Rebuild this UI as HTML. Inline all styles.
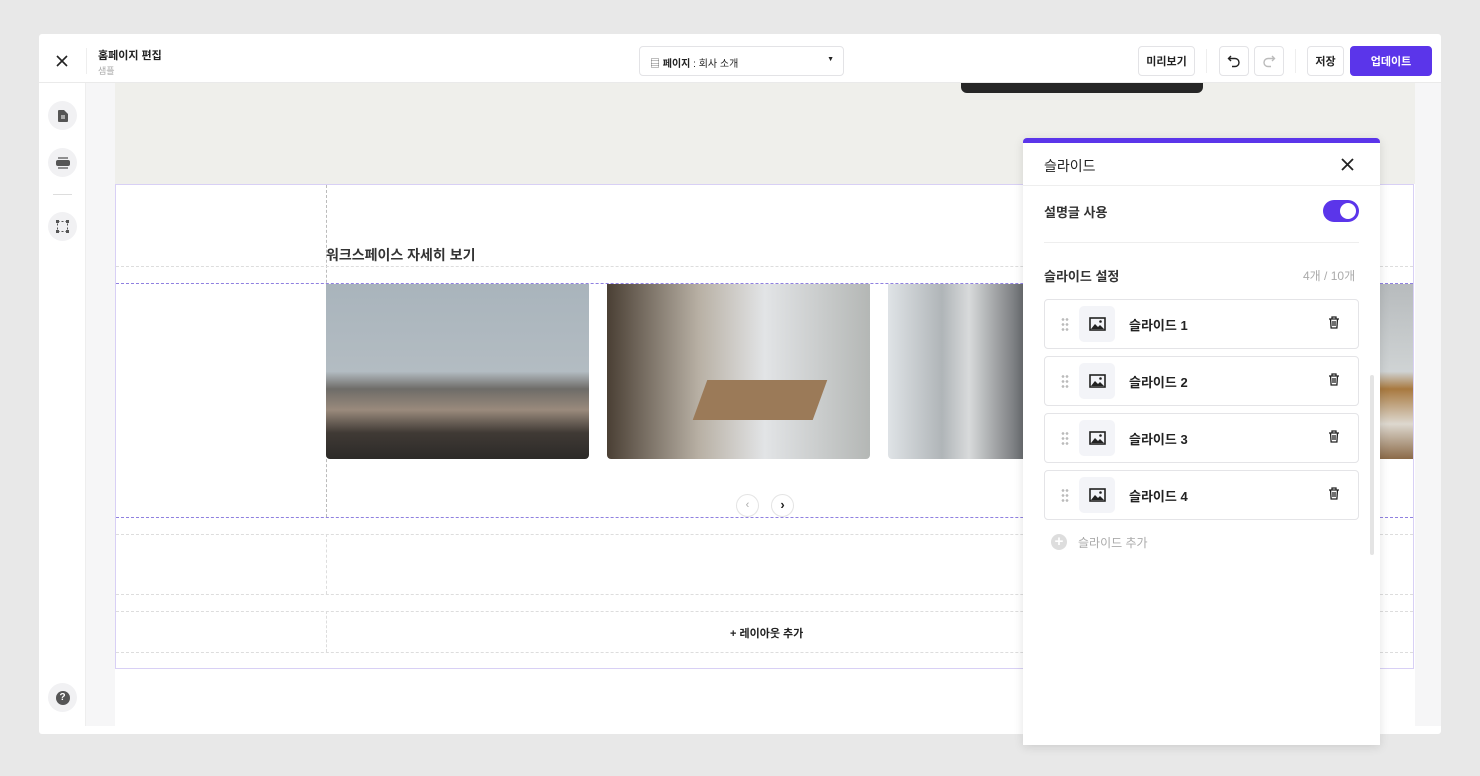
<!DOCTYPE html>
<html><head><meta charset="utf-8"><style>
*{box-sizing:border-box;margin:0;padding:0}
body{width:1480px;height:776px;background:#e8e8e8;font-family:"Liberation Sans","Noto Sans CJK KR",sans-serif;position:relative;overflow:hidden;color:#222}
.a{position:absolute}
.btn{position:absolute;top:46px;height:30px;border:1px solid #e3e3e6;border-radius:4px;background:#fff;font-size:11px;font-weight:bold;display:flex;align-items:center;justify-content:center}
.side{position:absolute;left:48px;width:29px;height:29px;border-radius:50%;background:#f1f1f3;display:flex;align-items:center;justify-content:center}
.dl{position:absolute;border-top:1px dashed #ddd}
.dv{position:absolute;border-left:1px dashed #ddd}
.item{position:absolute;left:1044px;width:315px;height:50px;border:1px solid #e4e4e7;border-radius:4px;background:#fff}
.item .g{position:absolute;left:16px;top:17px;width:8px;height:14px;background:radial-gradient(circle,#bbb 1.2px,transparent 1.5px) 0 0/4px 5px}
.item .ic{position:absolute;left:34px;top:6px;width:36px;height:36px;background:#f3f4f8;border-radius:5px;display:flex;align-items:center;justify-content:center}
.item .t{position:absolute;left:84px;top:15px;font-size:13px;font-weight:bold}
.item .d{position:absolute;right:18px;top:16px}
</style></head><body>
<div class="a" style="left:39px;top:34px;width:1402px;height:700px;background:#fff;border-radius:3px"></div>
<div class="a" style="left:39px;top:82px;width:1402px;height:1px;background:#eaeaea"></div>
<svg class="a" style="left:56px;top:55px" width="12" height="12" viewBox="0 0 12 12"><path d="M1 1L11 11M11 1L1 11" stroke="#222" stroke-width="1.6"/></svg>
<div class="a" style="left:86px;top:48px;width:1px;height:26px;background:#eee"></div>
<div class="a" style="left:98px;top:47px;font-size:11px;font-weight:bold">홈페이지 편집</div>
<div class="a" style="left:98px;top:64px;font-size:9px;color:#aaa">샘플</div>
<div class="a" style="left:639px;top:46px;width:205px;height:30px;border:1px solid #e3e3e6;border-radius:4px;font-size:10px;padding:8px 0 0 10px"><span style="color:#555">▤</span> <b>페이지</b> : 회사 소개<span class="a" style="right:9px;top:9px;font-size:7px">▼</span></div>
<div class="btn" style="left:1138px;width:57px">미리보기</div>
<div class="a" style="left:1206px;top:49px;width:1px;height:24px;background:#eee"></div>
<div class="btn" style="left:1219px;width:30px"><svg width="14" height="14" viewBox="0 0 14 14"><path d="M4 2L1.5 4.5L4 7M1.5 4.5H8a4 4 0 0 1 0 8H5" fill="none" stroke="#222" stroke-width="1.4"/></svg></div>
<div class="btn" style="left:1254px;width:30px"><svg width="14" height="14" viewBox="0 0 14 14"><path d="M10 2L12.5 4.5L10 7M12.5 4.5H6a4 4 0 0 0 0 8H9" fill="none" stroke="#bbb" stroke-width="1.4"/></svg></div>
<div class="a" style="left:1295px;top:49px;width:1px;height:24px;background:#eee"></div>
<div class="btn" style="left:1307px;width:37px">저장</div>
<div class="btn" style="left:1350px;width:82px;background:#5b35ea;border-color:#5b35ea;color:#fff">업데이트</div>
<div class="a" style="left:85px;top:83px;width:30px;height:643px;background:#f6f6f7;border-left:1px solid #eee"></div>
<div class="a" style="left:1415px;top:83px;width:26px;height:643px;background:#f6f6f7"></div>
<div class="side" style="top:101px"><svg width="10" height="12"><path d="M0 1a1 1 0 0 1 1-1h5l4 4v7a1 1 0 0 1-1 1H1a1 1 0 0 1-1-1z" fill="#555"/><path d="M3 6h4M3 8h4" stroke="#fff"/></svg></div>
<div class="side" style="top:148px"><svg width="14" height="12"><rect x="0" y="3" width="14" height="6" rx="2" fill="#555"/><path d="M2 1h10M2 11h10" stroke="#555" stroke-width="1.2"/></svg></div>
<div class="a" style="left:53px;top:194px;width:19px;height:1px;background:#ddd"></div>
<div class="side" style="top:212px"><svg width="13" height="13"><rect x="1.5" y="1.5" width="10" height="10" fill="none" stroke="#555" stroke-dasharray="2 2"/><g fill="#555"><rect x="0" y="0" width="3" height="3"/><rect x="10" y="0" width="3" height="3"/><rect x="0" y="10" width="3" height="3"/><rect x="10" y="10" width="3" height="3"/></g></svg></div>
<div class="side" style="top:683px"><div style="width:14px;height:14px;border-radius:50%;background:#555;color:#fff;font-size:10px;font-weight:bold;text-align:center;line-height:14px">?</div></div>
<div class="a" style="left:115px;top:83px;width:1300px;height:101px;background:#efefeb"></div>
<div class="a" style="left:961px;top:83px;width:242px;height:10px;background:#262626;border-radius:0 0 6px 6px"></div>
<div class="a" style="left:115px;top:184px;width:1299px;height:485px;border:1px solid #d8d0f5"></div>
<div class="dv" style="left:326px;top:185px;height:332px;border-color:#bbb"></div>
<div class="dl" style="left:116px;top:266px;width:1297px"></div>
<div class="a" style="left:326px;top:245px;font-size:14px;font-weight:bold;color:#333">워크스페이스 자세히 보기</div>
<div class="dl" style="left:116px;top:283px;width:1297px;border-color:#8f80e0"></div>
<div class="dl" style="left:116px;top:517px;width:1297px;border-color:#8f80e0"></div>
<div class="a" style="left:326px;top:284px;width:263px;height:175px;border-radius:0 0 4px 4px;background:linear-gradient(180deg,#a9b4bc 0%,#b3bcc2 50%,#6e6c68 60%,#9a8a7c 72%,#403a35 85%,#2c2a28 100%)"></div>
<div class="a" style="left:607px;top:284px;width:263px;height:175px;border-radius:0 0 4px 4px;background:linear-gradient(90deg,#4a3f34 0%,#b8b0a4 35%,#e2e4e6 60%,#b4b7b5 100%)"></div>
<div class="a" style="left:700px;top:380px;width:120px;height:40px;background:#9b7a58;transform:skewX(-20deg)"></div>
<div class="a" style="left:888px;top:284px;width:135px;height:175px;border-radius:0 0 0 4px;background:linear-gradient(90deg,#dfe3e6,#b0b5b8 40%,#d8dadb 60%,#6a6d70)"></div>
<div class="a" style="left:1380px;top:284px;width:33px;height:175px;background:linear-gradient(180deg,#b7bbbd 0%,#cfd3d4 50%,#a8793f 60%,#ddd8cf 80%,#8b6a48 100%)"></div>
<div class="a" style="left:736px;top:494px;width:23px;height:23px;border:1px solid #e4e4e4;border-radius:50%;font-size:11px;color:#aaa;text-align:center;line-height:21px">‹</div>
<div class="a" style="left:771px;top:494px;width:23px;height:23px;border:1px solid #e4e4e4;border-radius:50%;font-size:13px;font-weight:bold;text-align:center;line-height:20px">›</div>
<div class="dl" style="left:116px;top:534px;width:1297px"></div>
<div class="dv" style="left:326px;top:534px;height:60px"></div>
<div class="dl" style="left:116px;top:594px;width:1297px"></div>
<div class="dl" style="left:116px;top:611px;width:1297px"></div>
<div class="dv" style="left:326px;top:611px;height:41px"></div>
<div class="dl" style="left:116px;top:652px;width:1297px"></div>
<div class="a" style="left:730px;top:625px;font-size:11px;font-weight:bold">+ 레이아웃 추가</div>
<div class="a" style="left:1023px;top:138px;width:357px;height:607px;background:#fff;border-top:5px solid #5b35ea;border-radius:4px 4px 0 0;box-shadow:0 2px 10px rgba(0,0,0,.12)"></div>
<div class="a" style="left:1044px;top:156px;font-size:14px">슬라이드</div>
<svg class="a" style="left:1341px;top:158px" width="13" height="13" viewBox="0 0 13 13"><path d="M1 1L12 12M12 1L1 12" stroke="#222" stroke-width="1.8"/></svg>
<div class="a" style="left:1023px;top:185px;width:357px;height:1px;background:#eee"></div>
<div class="a" style="left:1044px;top:202px;font-size:13px;font-weight:bold;color:#333">설명글 사용</div>
<div class="a" style="left:1323px;top:200px;width:36px;height:22px;border-radius:11px;background:#5b35ea"><div class="a" style="left:17px;top:3px;width:16px;height:16px;border-radius:50%;background:#fff"></div></div>
<div class="a" style="left:1044px;top:242px;width:315px;height:1px;background:#eee"></div>
<div class="a" style="left:1044px;top:266px;font-size:13px;font-weight:bold;color:#333">슬라이드 설정</div>
<div class="a" style="left:1303px;top:267px;font-size:12px;color:#aaa">4개 / 10개</div>
<div class="a" style="left:1370px;top:375px;width:4px;height:180px;border-radius:2px;background:#e4e4e4"></div>
<div class="item" style="top:299px"><div class="g"></div><div class="ic"><svg width="17" height="14"><rect x="1" y="1" width="15" height="12" fill="none" stroke="#222" stroke-width="1.6"/><path d="M2 12L6 7L9 10L11 8L15 12Z" fill="#222"/><circle cx="11.5" cy="4.5" r="1.3" fill="#222"/></svg></div><div class="t">슬라이드 1</div><div class="d"><svg width="12" height="13"><path d="M1 3h10M4 3V1h4v2M2.5 3l.6 9h5.8l.6-9M5 5v5M7 5v5" fill="none" stroke="#222" stroke-width="1.3"/></svg></div></div>
<div class="item" style="top:356px"><div class="g"></div><div class="ic"><svg width="17" height="14"><rect x="1" y="1" width="15" height="12" fill="none" stroke="#222" stroke-width="1.6"/><path d="M2 12L6 7L9 10L11 8L15 12Z" fill="#222"/><circle cx="11.5" cy="4.5" r="1.3" fill="#222"/></svg></div><div class="t">슬라이드 2</div><div class="d"><svg width="12" height="13"><path d="M1 3h10M4 3V1h4v2M2.5 3l.6 9h5.8l.6-9M5 5v5M7 5v5" fill="none" stroke="#222" stroke-width="1.3"/></svg></div></div>
<div class="item" style="top:413px"><div class="g"></div><div class="ic"><svg width="17" height="14"><rect x="1" y="1" width="15" height="12" fill="none" stroke="#222" stroke-width="1.6"/><path d="M2 12L6 7L9 10L11 8L15 12Z" fill="#222"/><circle cx="11.5" cy="4.5" r="1.3" fill="#222"/></svg></div><div class="t">슬라이드 3</div><div class="d"><svg width="12" height="13"><path d="M1 3h10M4 3V1h4v2M2.5 3l.6 9h5.8l.6-9M5 5v5M7 5v5" fill="none" stroke="#222" stroke-width="1.3"/></svg></div></div>
<div class="item" style="top:470px"><div class="g"></div><div class="ic"><svg width="17" height="14"><rect x="1" y="1" width="15" height="12" fill="none" stroke="#222" stroke-width="1.6"/><path d="M2 12L6 7L9 10L11 8L15 12Z" fill="#222"/><circle cx="11.5" cy="4.5" r="1.3" fill="#222"/></svg></div><div class="t">슬라이드 4</div><div class="d"><svg width="12" height="13"><path d="M1 3h10M4 3V1h4v2M2.5 3l.6 9h5.8l.6-9M5 5v5M7 5v5" fill="none" stroke="#222" stroke-width="1.3"/></svg></div></div>
<div class="a" style="left:1051px;top:534px;width:16px;height:16px;border-radius:50%;background:#ddd;color:#fff;font-size:15px;font-weight:bold;text-align:center;line-height:16px">+</div>
<div class="a" style="left:1078px;top:534px;font-size:12px;color:#aaa">슬라이드 추가</div>
</body></html>
